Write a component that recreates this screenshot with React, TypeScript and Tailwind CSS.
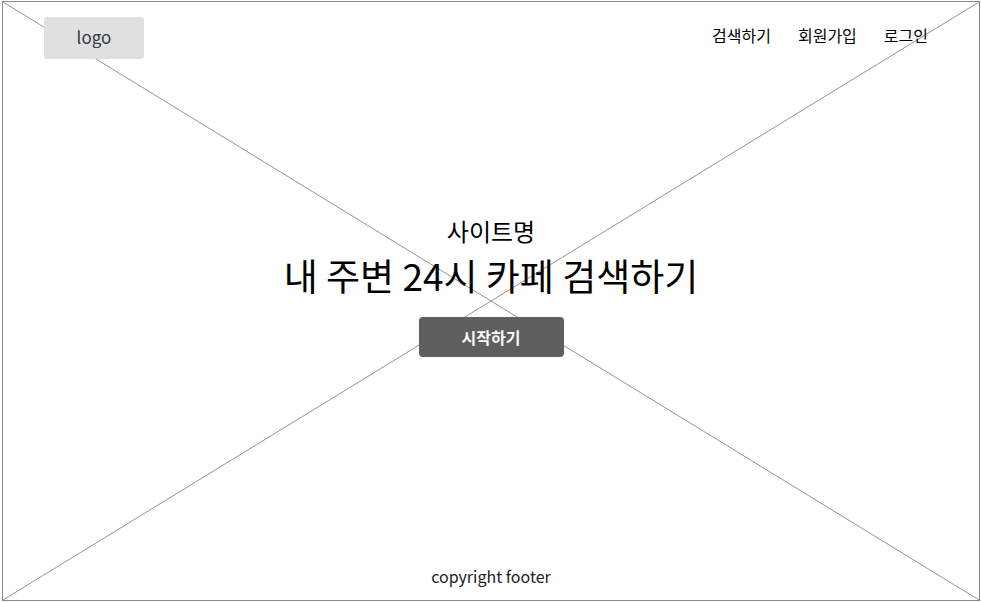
export default function App() {
  return (
    <div
      className="w-[981px] h-[603px] bg-white"
      style={{ fontFamily: '"Noto Sans CJK KR", "Noto Sans", sans-serif' }}
    >
      <div className="relative ml-[2px] mt-[1px] w-[978px] h-[600px] border border-[#8a8a8a] flex flex-col">
        {/* placeholder X */}
        <svg
          className="absolute inset-0 w-full h-full pointer-events-none"
          viewBox="0 0 976 598"
          preserveAspectRatio="none"
        >
          <line x1="0" y1="0" x2="976" y2="598" stroke="#939393" strokeWidth="1" />
          <line x1="976" y1="0" x2="0" y2="598" stroke="#939393" strokeWidth="1" />
        </svg>

        <header className="relative flex items-start justify-between pl-[41px] pr-[51px] pt-[15px]">
          <div className="w-[100px] h-[42px] bg-[#e0e0e0] rounded-[3px] flex items-center justify-center pb-[3px] text-[17px] text-[#363645]">
            logo
          </div>
          <nav className="flex gap-[27px] text-[16px] leading-[24px] text-black pt-[6px]">
            <a>검색하기</a>
            <a>회원가입</a>
            <a>로그인</a>
          </nav>
        </header>

        <main className="relative flex-1 flex flex-col items-center pt-[154px]">
          <p className="text-[24px] leading-[35px] text-black">사이트명</p>
          <h1 className="text-[37px] leading-[54px] text-black">내 주변 24시 카페 검색하기</h1>
          <button className="mt-[15px] w-[145px] h-[40px] rounded-[4px] bg-[#5f5f5f] text-[#fafafa] text-[16px] font-bold">
            시작하기
          </button>
        </main>

        <footer className="relative flex justify-center pb-[12px]">
          <span className="text-[16px] leading-[24px] text-[#222]">copyright footer</span>
        </footer>
      </div>
    </div>
  );
}
